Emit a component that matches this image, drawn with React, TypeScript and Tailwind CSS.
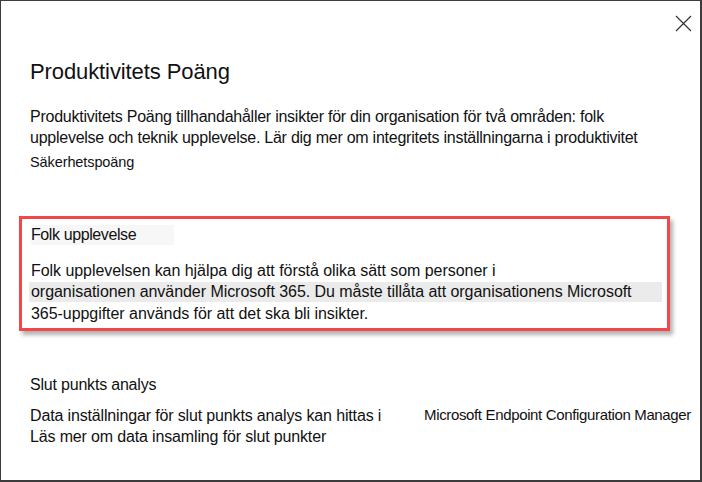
import React from "react";

export default function App() {
  return (
    <div
      className="w-[702px] h-[482px] bg-white border-l border-t border-r-2 border-b-2 border-[#3c3c3c] text-[#111] relative overflow-hidden"
      style={{ fontFamily: '"Liberation Sans", Arial, sans-serif' }}
    >
      <button className="absolute left-[673px] top-[13px] w-[18px] h-[18px] flex items-center justify-center">
        <svg width="17" height="17" viewBox="0 0 17 17" fill="none">
          <path d="M1 1 L16 16 M16 1 L1 16" stroke="#333" strokeWidth="1.2" />
        </svg>
      </button>

      <div className="pl-[29px] pr-[12px]">
        <h1 className="pt-[59px] text-[22px] leading-[24px] font-normal tracking-[-0.1px]">Produktivitets Poäng</h1>

        <p className="mt-[22px] text-[16px] leading-[21px] tracking-[-0.25px] w-[640px]">
          Produktivitets Poäng tillhandahåller insikter för din organisation för två områden: folk
          upplevelse och teknik upplevelse. Lär dig mer om integritets inställningarna i produktivitet
        </p>
        <div className="mt-[5px] text-[14.5px] leading-[18px] tracking-[-0.1px]">Säkerhetspoäng</div>
      </div>

      <div className="ml-[18px] mt-[45px] w-[651px] h-[115px] border-[3px] border-[#f24747] shadow-[3px_4px_4px_rgba(0,0,0,0.3)] pl-[9px] pt-[4px]">
        <div className="inline-block bg-[#f7f7f7] pr-[38px] text-[16px] leading-[20px] tracking-[-0.4px]">
          Folk upplevelse
        </div>
        <div className="mt-[13px] text-[16px] leading-[21px] tracking-[-0.05px]">
          <div>Folk upplevelsen kan hjälpa dig att förstå olika sätt som personer i</div>
          <div className="bg-[#ebebeb] w-[633px] -ml-[2px] pl-[2px] h-[20px] leading-[20px] mt-[1px]">
            organisationen använder Microsoft 365. Du måste tillåta att organisationens Microsoft
          </div>
          <div className="mt-[1px]">365-uppgifter används för att det ska bli insikter.</div>
        </div>
      </div>

      <div className="pl-[29px] mt-[44px]">
        <div className="text-[16px] leading-[20px] tracking-[-0.2px]">Slut punkts analys</div>
        <div className="mt-[10px] flex items-start">
          <div className="w-[394px] text-[16px] leading-[21px] tracking-[-0.15px]">
            <div>Data inställningar för slut punkts analys kan hittas i</div>
            <div>Läs mer om data insamling för slut punkter</div>
          </div>
          <div className="text-[15px] leading-[18px] tracking-[-0.35px] pt-[1px]">
            Microsoft Endpoint Configuration Manager
          </div>
        </div>
      </div>
    </div>
  );
}
